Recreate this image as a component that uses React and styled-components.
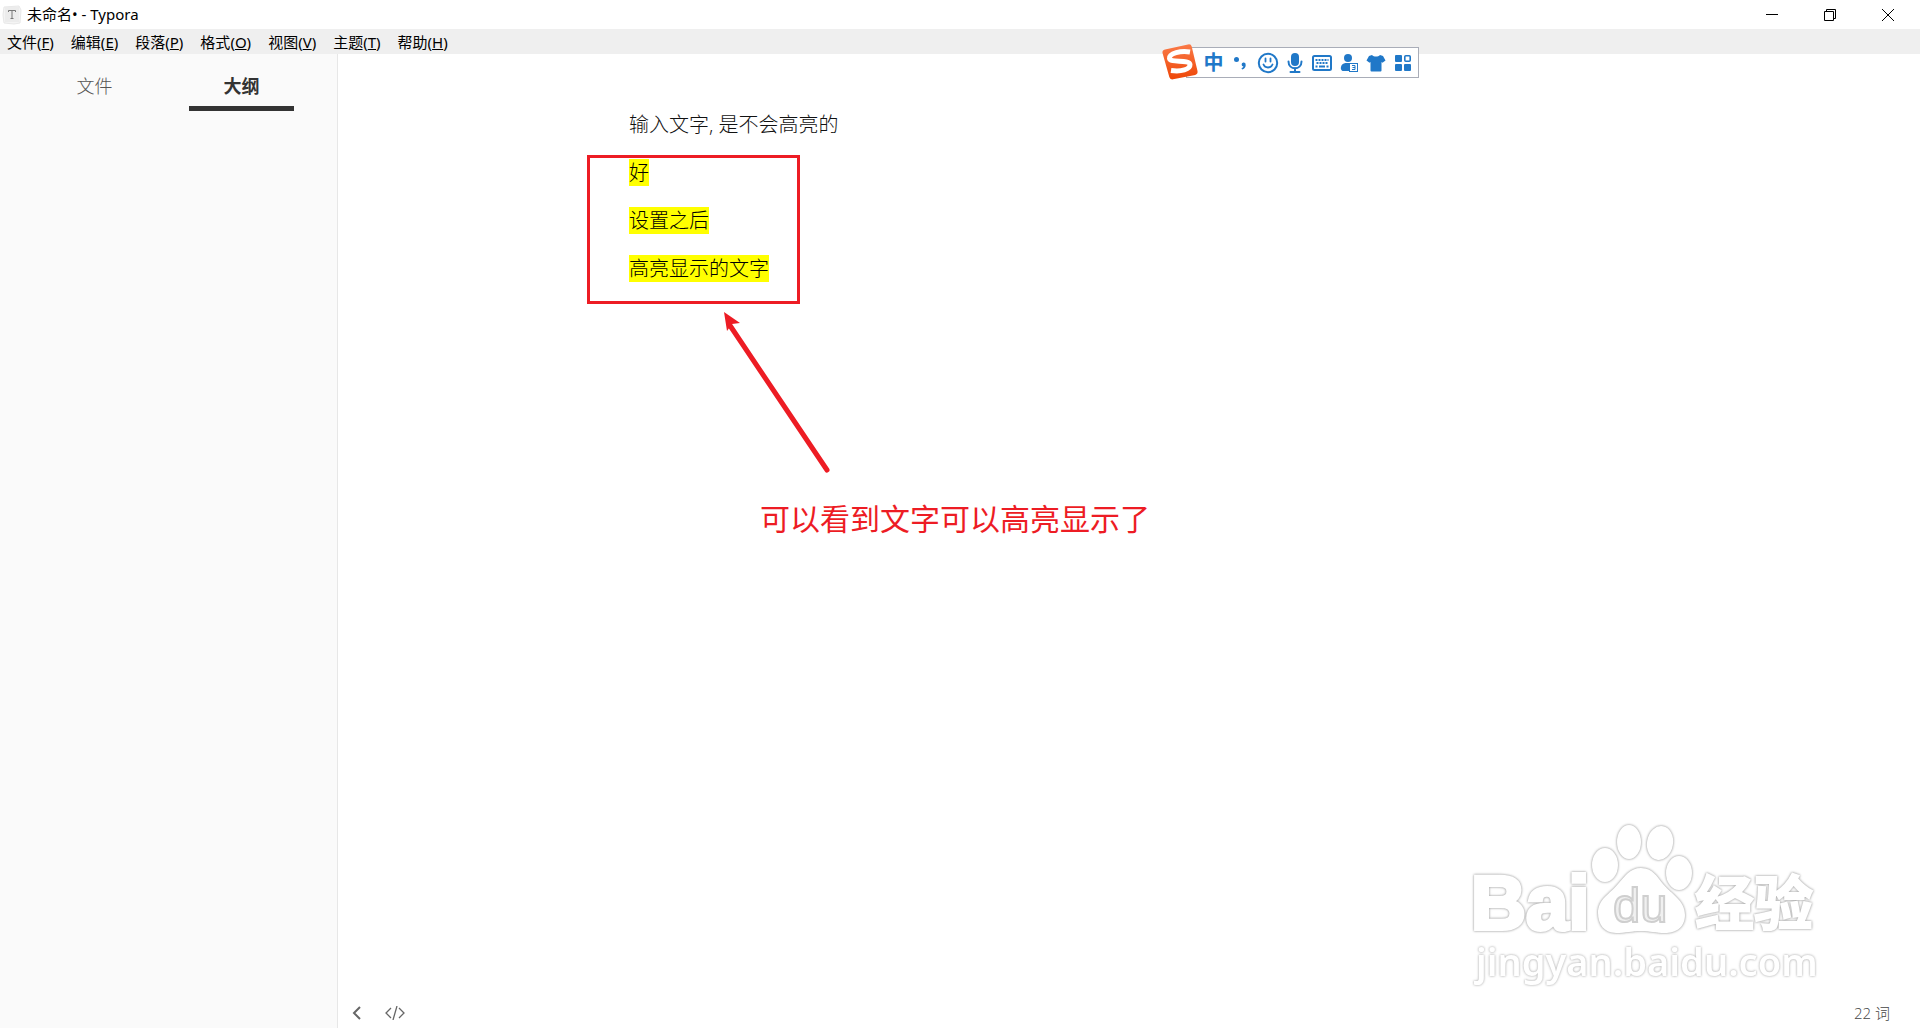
import styled, { createGlobalStyle } from "styled-components";

const GlobalStyle = createGlobalStyle`
  * {
    box-sizing: border-box;
  }
  body {
    margin: 0;
    background-color: #fff;
    font-family: "Open Sans", "Noto Sans CJK SC", sans-serif;
  }
  button {
    font-family: inherit;
    border: none;
    background: none;
    padding: 0;
    cursor: pointer;
  }
`;

const Window = styled.div`
  position: relative;
  display: flex;
  flex-direction: column;
  min-height: 100vh;
  overflow: hidden;
`;

const TitleBar = styled.header`
  display: flex;
  align-items: center;
  height: 29px;
  padding: 0 3px 0 2px;
`;

const Title = styled.h1`
  flex: 1;
  margin: 0 0 0 5px;
  font-family: "Noto Sans", "Noto Sans CJK SC", sans-serif;
  font-size: 15px;
  line-height: 18px;
  height: 20px;
  font-weight: 400;
  color: #000;
`;

const WindowButton = styled.button`
  display: flex;
  align-items: center;
  justify-content: center;
  width: 58px;
  height: 24px;
`;

const MenuBar = styled.nav`
  display: flex;
  gap: 17px;
  height: 25px;
  padding: 0 7px;
  background-color: #efefef;
`;

const MenuItem = styled.button`
  font-family: "Noto Sans", "Noto Sans CJK SC", sans-serif;
  font-size: 15px;
  line-height: 24px;
  color: #000;
`;

const Main = styled.div`
  display: flex;
  flex: 1;
`;

const Sidebar = styled.aside`
  flex: 0 0 338px;
  padding: 0 22px 0 21px;
  background-color: #fafafa;
  border-right: 1px solid #e7e7e7;
`;

const Tabs = styled.div`
  display: flex;
`;

const Tab = styled.button`
  flex: 1;
  display: flex;
  flex-direction: column;
  padding: 18px 21px 0;
  font-size: 18px;
  line-height: 28px;
  font-weight: ${(props) => (props.$active ? 700 : 300)};
  color: ${(props) => (props.$active ? "#333" : "#555")};

  span {
    width: 100%;
    padding-bottom: 6px;
    border-bottom: 5px solid ${(props) => (props.$active ? "#333" : "transparent")};
  }
`;

const Editor = styled.main`
  flex: 1;
  display: flex;
  flex-direction: column;
`;

const Page = styled.article`
  position: relative;
  flex: 1;
  width: 100%;
  max-width: 1000px;
  margin: 0 auto;
  padding-top: 55px;
`;

const Paragraph = styled.p`
  margin: 0 0 16px;
  font-size: 20px;
  line-height: 32px;
  font-weight: 300;
  color: #111;
`;

const Mark = styled.mark`
  background-color: #ff0;
  color: #000;
`;

const Frame = styled.div`
  position: absolute;
  left: -42px;
  top: 101px;
  width: 213px;
  height: 149px;
  border: 3px solid #ed1c24;
`;

const Arrow = styled.svg`
  position: absolute;
  left: 90px;
  top: 254px;
`;

const Note = styled.p`
  position: absolute;
  left: 131px;
  top: 445px;
  margin: 0;
  font-size: 30px;
  line-height: 40px;
  color: #ed1c24;
  white-space: nowrap;
`;

const Footer = styled.footer`
  display: flex;
  align-items: center;
  gap: 23px;
  height: 31px;
  padding: 0 30px 0 14px;
  color: #666;
`;

const FooterButton = styled.button`
  display: flex;
  color: #666;
`;

const WordCount = styled.button`
  margin-left: auto;
  font-size: 15px;
  line-height: 20px;
  font-weight: 300;
  color: #444;
`;

const ImeBar = styled.div`
  position: absolute;
  top: 47px;
  right: 501px;
  display: flex;
  align-items: center;
  height: 31px;
  padding: 0 2px 0 13px;
  background-color: #fff;
  border: 1px solid #a9adb8;
`;

const ImeLogo = styled.svg`
  position: absolute;
  left: -26px;
  top: -5px;
`;

const ImeButton = styled.button`
  display: flex;
  align-items: center;
  justify-content: center;
  width: 27px;
  height: 30px;
  font-size: 20px;
  line-height: 30px;
  font-weight: 700;
  color: #2078c8;
`;

const Watermark = styled.svg`
  position: absolute;
  right: 80px;
  bottom: 28px;
  pointer-events: none;

  .glow {
    fill: #fff;
    filter: drop-shadow(0 0 1px #a4a4a4) drop-shadow(0 0 1px #d8d8d8);
  }
  .soft {
    fill: #fff;
    filter: drop-shadow(0 0 1px #b4b4b4) drop-shadow(0 0 1px #e4e4e4);
  }
`;

const menus = [
  ["文件", "F"],
  ["编辑", "E"],
  ["段落", "P"],
  ["格式", "O"],
  ["视图", "V"],
  ["主题", "T"],
  ["帮助", "H"],
];

const highlighted = ["好", "设置之后", "高亮显示的文字"];

const AppIcon = () => (
  <svg width="20" height="20" viewBox="0 0 20 20">
    <path d="M2 2 17 1l2 4-1 13-6 1-10-1-1-8z" fill="#f4f4f4" stroke="#e8e8e8" />
    <rect x="3" y="2" width="14" height="15" fill="#ececec" />
    <path d="M6.500 7V5.500h7V7M10 5.500v8M8.500 13.500h3" fill="none" stroke="#777" />
  </svg>
);

const Punctuation = () => (
  <svg width="20" height="20" viewBox="0 0 20 20" fill="currentColor">
    <circle cx="5.500" cy="6.500" r="2.500" />
    <path d="M12.200 9.500a2.300 2.300 0 0 1 2.500 2.400c0 2.500-1.500 4-3.600 4.600l-.6-1.200c1.100-.4 1.700-1 1.900-1.700a2.100 2.100 0 0 1-.2-4.100z" />
  </svg>
);

const Smiley = () => (
  <svg width="22" height="22" viewBox="0 0 22 22" fill="none" stroke="currentColor">
    <circle cx="11" cy="11" r="9.200" strokeWidth="2" />
    <path d="M8.500 6.500v3M13.500 6.500v3M6.500 12.500c1.500 4 7.500 4 9 0" strokeWidth="1.800" strokeLinecap="round" />
  </svg>
);

const Mic = () => (
  <svg width="20" height="22" viewBox="0 0 20 22" fill="none" stroke="currentColor" strokeWidth="2">
    <rect x="6" y="1" width="8" height="13" rx="4" fill="currentColor" stroke="none" />
    <path d="M3.500 9.500c0 9 13 9 13 0M10 16v4M5.500 20h9" strokeLinecap="round" />
  </svg>
);

const Keyboard = () => (
  <svg width="22" height="18" viewBox="0 0 22 18" fill="none" stroke="currentColor">
    <rect x="2" y="2" width="18" height="14" rx="1.500" strokeWidth="2" />
    <path d="M4.500 6h13M5.500 9h12" strokeWidth="1.800" strokeDasharray="2 1" />
    <path d="M4.500 12.500h2M8 12.500h6M15.500 12.500h2" strokeWidth="2" />
  </svg>
);

const Person = () => (
  <svg width="20" height="20" viewBox="0 0 20 20">
    <circle cx="9" cy="5" r="4" fill="currentColor" />
    <path d="M3.500 18c-3-1.500-2-7.500 3-8h5c4 .5 5 3 5 8z" fill="currentColor" />
    <rect x="10.500" y="10.500" width="8" height="8" fill="#fff" stroke="currentColor" />
    <path d="M13 12.500h3v4h-3M13.500 14.500H16" fill="none" stroke="currentColor" />
  </svg>
);

const Shirt = () => (
  <svg width="20" height="20" viewBox="0 0 20 20" fill="currentColor">
    <path d="M6 2c2 2 6 2 8 0l3 1 2.500 4.500-3 2.200-1-.7v8.500q0 1-1 1h-9q-1 0-1-1V9l-1 .7-3-2.200L3 3z" />
  </svg>
);

const Tiles = () => (
  <svg width="18" height="18" viewBox="0 0 18 18" fill="currentColor">
    <rect x="1" y="1" width="7" height="7" rx="1" />
    <rect x="1" y="10" width="7" height="7" rx="1" />
    <rect x="10" y="10" width="7" height="7" rx="1" />
    <rect x="10.800" y="1.800" width="5.400" height="5.400" rx="1" fill="none" stroke="currentColor" strokeWidth="1.600" />
  </svg>
);

const imeTools = [
  { label: "中英文", icon: "中" },
  { label: "标点", icon: <Punctuation /> },
  { label: "表情", icon: <Smiley /> },
  { label: "语音", icon: <Mic /> },
  { label: "软键盘", icon: <Keyboard /> },
  { label: "账户", icon: <Person /> },
  { label: "皮肤", icon: <Shirt /> },
  { label: "工具箱", icon: <Tiles /> },
];

const SogouLogo = () => (
  <ImeLogo width="38" height="38" viewBox="0 0 38 38">
    <defs>
      <linearGradient id="sogou" x1="0" y1="0" x2="0" y2="1">
        <stop offset="0" stopColor="#fa7a48" />
        <stop offset="1" stopColor="#ee4708" />
      </linearGradient>
    </defs>
    <path
      d="M4 6.500 27 1.500q3-.7 3.700 2L36.500 28q.6 3-2.300 3.900L12 36.300q-3 .5-3.700-2.300L1.500 10q-.5-3 2.500-3.500z"
      fill="url(#sogou)"
    />
    <path
      d="M29 9C20 7.500 8 10 8.500 15.500c.5 4.700 20 .5 20.500 6 .3 5-9 7.500-19 6"
      fill="none"
      stroke="#fff"
      strokeWidth="5"
    />
  </ImeLogo>
);

const BaiduMark = () => (
  <Watermark width="390" height="200" viewBox="0 0 390 200">
    <g className="glow">
      <text
        x="21"
        y="129"
        fontFamily="Liberation Sans, sans-serif"
        fontWeight="700"
        fontSize="76"
        stroke="#fff"
        strokeWidth="4"
      >
        Bai
      </text>
      <ellipse cx="155" cy="65" rx="13" ry="17" />
      <ellipse cx="179" cy="42" rx="12" ry="17" />
      <ellipse cx="210" cy="43" rx="13" ry="17" transform="rotate(10 210 43)" />
      <ellipse cx="229" cy="73" rx="13" ry="17" />
      <path d="M191 68c12 0 16 9 22 16 8 10 22 16 22 31 0 13-10 18-20 18-9 0-15-2-24-2s-15 2-25 2c-12 0-18-9-18-20 0-14 12-19 20-29 7-8 12-16 23-16z" />
      <text
        x="245"
        y="125"
        fontFamily="Noto Sans CJK SC, sans-serif"
        fontWeight="700"
        fontSize="59"
        stroke="#fff"
        strokeWidth="2"
      >
        经验
      </text>
    </g>
    <text
      x="163"
      y="122"
      fontFamily="Liberation Sans, sans-serif"
      fontSize="49"
      fill="#f0f0f0"
      stroke="#cfcfcf"
      strokeWidth="2"
    >
      du
    </text>
    <text className="soft" x="26" y="176" fontFamily="Noto Sans, sans-serif" fontWeight="600" fontSize="38">
      jingyan.baidu.com
    </text>
  </Watermark>
);

const App = () => {
  return (
    <Window>
      <GlobalStyle />
      <TitleBar>
        <AppIcon />
        <Title>未命名• - Typora</Title>
        <WindowButton aria-label="最小化">
          <svg width="12" height="12" stroke="#000">
            <path d="M0 5.500h12" />
          </svg>
        </WindowButton>
        <WindowButton aria-label="还原">
          <svg width="12" height="12" stroke="#000" fill="none">
            <path d="M.5 2.500h9v9h-9zM2.500 2.500v-2h9v9h-2" />
          </svg>
        </WindowButton>
        <WindowButton aria-label="关闭">
          <svg width="12" height="12" stroke="#000">
            <path d="M0 0l12 12M12 0 0 12" />
          </svg>
        </WindowButton>
      </TitleBar>
      <MenuBar>
        {menus.map(([name, key]) => (
          <MenuItem key={key}>
            {name}(<u>{key}</u>)
          </MenuItem>
        ))}
      </MenuBar>
      <Main>
        <Sidebar>
          <Tabs>
            <Tab>
              <span>文件</span>
            </Tab>
            <Tab $active>
              <span>大纲</span>
            </Tab>
          </Tabs>
        </Sidebar>
        <Editor>
          <Page>
            <Paragraph>输入文字, 是不会高亮的</Paragraph>
            {highlighted.map((text) => (
              <Paragraph key={text}>
                <Mark>{text}</Mark>
              </Paragraph>
            ))}
            <Frame />
            <Arrow width="116" height="170" viewBox="0 0 116 170">
              <path d="M10 16 108 162" stroke="#ed1c24" strokeWidth="5" strokeLinecap="round" />
              <path d="M5 4 21 15l-8 1-5 7z" fill="#ed1c24" />
            </Arrow>
            <Note>可以看到文字可以高亮显示了</Note>
          </Page>
          <Footer>
            <FooterButton aria-label="侧边栏">
              <svg width="10" height="14" fill="none" stroke="currentColor" strokeWidth="2">
                <path d="M8 1 2 7l6 6" />
              </svg>
            </FooterButton>
            <FooterButton aria-label="源代码模式">
              <svg width="20" height="14" fill="none" stroke="currentColor" strokeWidth="1.300">
                <path d="M6 2 1 7l5 5M14 2l5 5-5 5M12 0 8 14" />
              </svg>
            </FooterButton>
            <WordCount>22 词</WordCount>
          </Footer>
        </Editor>
      </Main>
      <ImeBar>
        <SogouLogo />
        {imeTools.map((tool) => (
          <ImeButton key={tool.label} aria-label={tool.label}>
            {tool.icon}
          </ImeButton>
        ))}
      </ImeBar>
      <BaiduMark />
    </Window>
  );
};

export default App;
